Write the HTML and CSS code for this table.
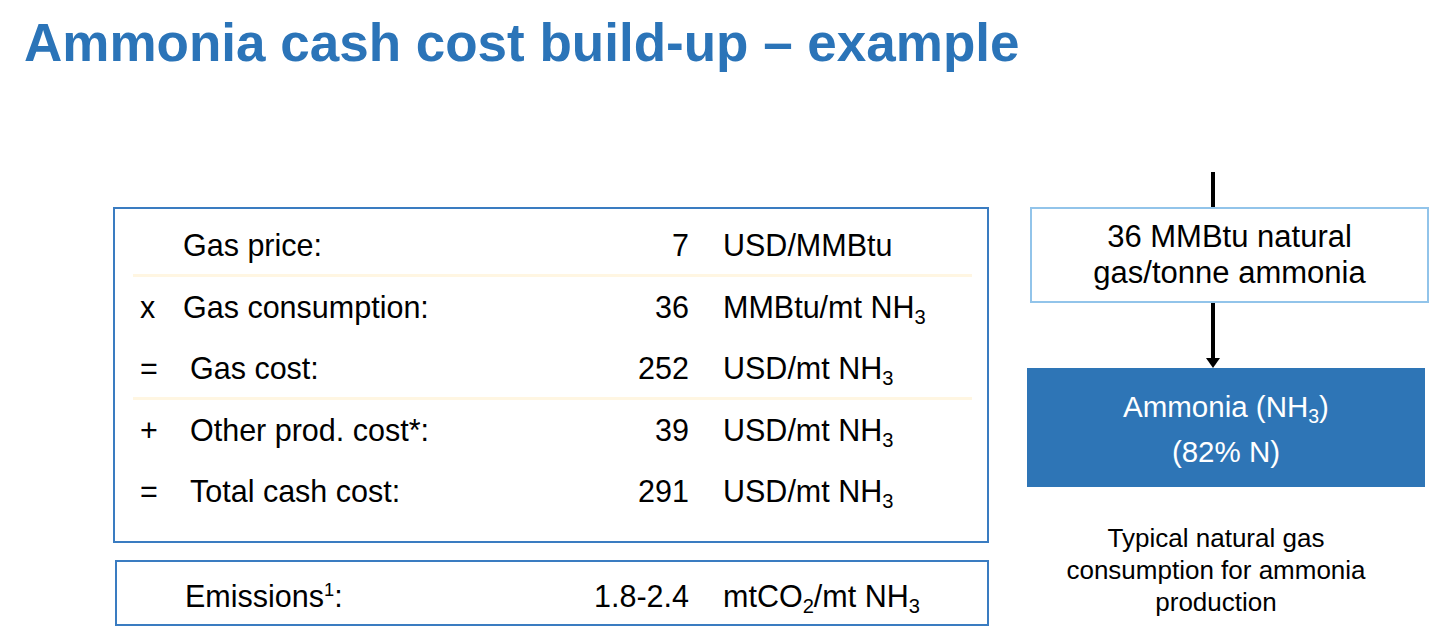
FILE: index.html
```html
<!DOCTYPE html>
<html>
<head>
<meta charset="utf-8">
<link rel="stylesheet" href="styles.css">
</head>
<body>
<h1 class="title">Ammonia cash cost build-up – example</h1>
<div class="content">
  <div class="left">
    <div class="calc">
      <div class="row sep"><span class="op"></span><span class="label">Gas price:</span><span class="num">7</span><span class="unit">USD/MMBtu</span></div>
      <div class="row"><span class="op">x</span><span class="label">Gas consumption:</span><span class="num">36</span><span class="unit">MMBtu/mt NH<sub>3</sub></span></div>
      <div class="row sep"><span class="op">=</span><span class="label indent">Gas cost:</span><span class="num">252</span><span class="unit">USD/mt NH<sub>3</sub></span></div>
      <div class="row"><span class="op">+</span><span class="label indent">Other prod. cost*:</span><span class="num">39</span><span class="unit">USD/mt NH<sub>3</sub></span></div>
      <div class="row"><span class="op">=</span><span class="label indent">Total cash cost:</span><span class="num">291</span><span class="unit">USD/mt NH<sub>3</sub></span></div>
    </div>
    <div class="emissions">
      <div class="row"><span class="op"></span><span class="label shift">Emissions<sup>1</sup>:</span><span class="num">1.8-2.4</span><span class="unit">mtCO<sub>2</sub>/mt NH<sub>3</sub></span></div>
    </div>
  </div>
  <div class="right">
    <div class="line-top"></div>
    <div class="gas-box"><div class="box-text">36 MMBtu natural<br>gas/tonne ammonia</div></div>
    <div class="arrow">
      <div class="shaft"></div>
      <div class="head"></div>
    </div>
    <div class="nh3-box"><div class="box-text">Ammonia (NH<sub>3</sub>)<br>(82% N)</div></div>
    <p class="caption">Typical natural gas<br>consumption for ammonia<br>production</p>
  </div>
</div>
</body>
</html>
```
FILE: styles.css
```css
html, body {
  margin: 0;
  padding: 0;
  background: #fff;
}
body {
  font-family: "Liberation Sans", Arial, sans-serif;
  color: #000;
  width: 1452px;
  height: 642px;
  overflow: hidden;
}
.title {
  margin: 0;
  padding: 16px 0 0 24px;
  font-size: 53px;
  line-height: 1;
  font-weight: bold;
  color: #2B74B8;
  height: 53px;
}
.content {
  display: flex;
  align-items: flex-start;
  margin-top: 103px;
}
.left {
  margin-left: 113px;
  margin-top: 35px;
  width: 876px;
}
.calc {
  border: 2px solid #3A7CC1;
  height: 336px;
  box-sizing: border-box;
  padding: 6px 15px 0 18px;
}
.row {
  display: grid;
  grid-template-columns: 50px 1fr 154px 249px;
  align-items: start;
  height: 61.5px;
  box-sizing: border-box;
  padding-top: 13px;
  font-size: 30.5px;
  line-height: 34px;
}
.row.sep {
  border-bottom: 3px solid #FFF6E2;
}
.op {
  padding-left: 7px;
}
.label.indent {
  padding-left: 7px;
}
.label.shift {
  padding-left: 2px;
}
.num {
  text-align: right;
  padding-right: 34px;
}
sub {
  font-size: 0.66em;
  vertical-align: -0.3em;
  line-height: 0;
}
sup {
  font-size: 0.6em;
  vertical-align: 0.6em;
  line-height: 0;
}
.emissions {
  margin-top: 17px;
  margin-left: 2px;
  width: 874px;
  height: 66px;
  box-sizing: border-box;
  border: 2px solid #3A7CC1;
  padding: 4px 15px 0 16px;
}
.right {
  margin-left: 38px;
  width: 402px;
  display: flex;
  flex-direction: column;
}
.line-top {
  margin-left: 184px;
  width: 4px;
  height: 35px;
  background: #000;
}
.gas-box {
  margin-left: 3px;
  width: 399px;
  height: 96px;
  box-sizing: border-box;
  border: 2px solid #92C4EA;
  display: flex;
  align-items: center;
  justify-content: center;
  text-align: center;
  font-size: 31px;
  line-height: 36px;
}
.arrow {
  margin-left: 178px;
  width: 16px;
  height: 65px;
  display: flex;
  flex-direction: column;
  align-items: center;
}
.shaft {
  width: 4px;
  height: 55px;
  background: #000;
}
.head {
  width: 0;
  height: 0;
  border-left: 7px solid transparent;
  border-right: 7px solid transparent;
  border-top: 10px solid #000;
}
.nh3-box {
  width: 398px;
  height: 119px;
  box-sizing: border-box;
  background: #2E75B6;
  color: #fff;
  display: flex;
  align-items: center;
  justify-content: center;
  text-align: center;
  padding-top: 3px;
  font-size: 29.5px;
  line-height: 45px;
}
.caption {
  margin: 35px 0 0 0;
  width: 402px;
  box-sizing: border-box;
  padding-right: 24px;
  text-align: center;
  font-size: 26px;
  line-height: 32px;
}
```
